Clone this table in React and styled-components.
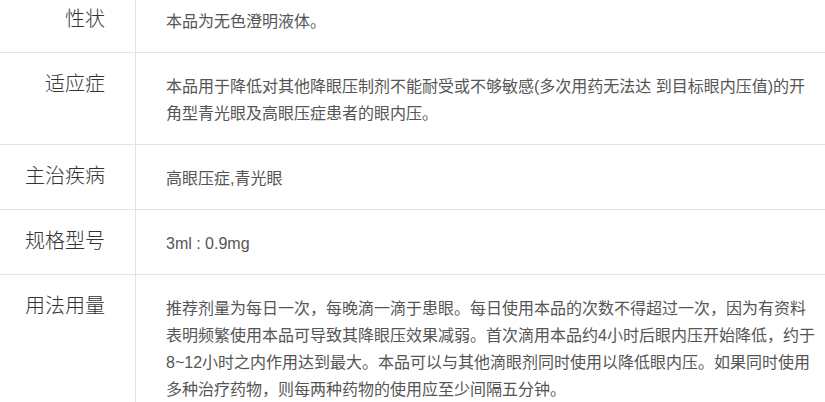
import React from 'react';
import styled, { createGlobalStyle } from 'styled-components';

const GlobalStyle = createGlobalStyle`
  * {
    margin: 0;
    padding: 0;
    box-sizing: border-box;
  }
  body {
    background-color: #fff;
    font-family: "Liberation Sans", "Noto Sans CJK SC", sans-serif;
    overflow: hidden;
  }
`;

const Table = styled.div`
  width: 825px;
  margin-top: -12px;
`;

const Row = styled.div`
  display: grid;
  grid-template-columns: 136px 1fr;
  border-bottom: 1px solid #e3e3e3;
`;

const Label = styled.div`
  border-right: 1px solid #e3e3e3;
  padding: 18px 30px 17px 0;
  text-align: right;
  font-size: 20px;
  font-weight: 300;
  line-height: 27px;
  color: #333;
`;

const Value = styled.div`
  padding: 20px 8px 17px 30px;
  font-size: 16px;
  line-height: 27px;
  color: #555;
`;

const rows = [
  ['性状', '本品为无色澄明液体。'],
  ['适应症', '本品用于降低对其他降眼压制剂不能耐受或不够敏感(多次用药无法达 到目标眼内压值)的开角型青光眼及高眼压症患者的眼内压。'],
  ['主治疾病', '高眼压症,青光眼'],
  ['规格型号', '3ml : 0.9mg'],
  ['用法用量', '推荐剂量为每日一次，每晚滴一滴于患眼。每日使用本品的次数不得超过一次，因为有资料表明频繁使用本品可导致其降眼压效果减弱。首次滴用本品约4小时后眼内压开始降低，约于8~12小时之内作用达到最大。本品可以与其他滴眼剂同时使用以降低眼内压。如果同时使用多种治疗药物，则每两种药物的使用应至少间隔五分钟。'],
];

export default function App() {
  return (
    <>
      <GlobalStyle />
      <Table>
        {rows.map(([k, v]) => (
          <Row key={k}>
            <Label>{k}</Label>
            <Value>{v}</Value>
          </Row>
        ))}
      </Table>
    </>
  );
}
